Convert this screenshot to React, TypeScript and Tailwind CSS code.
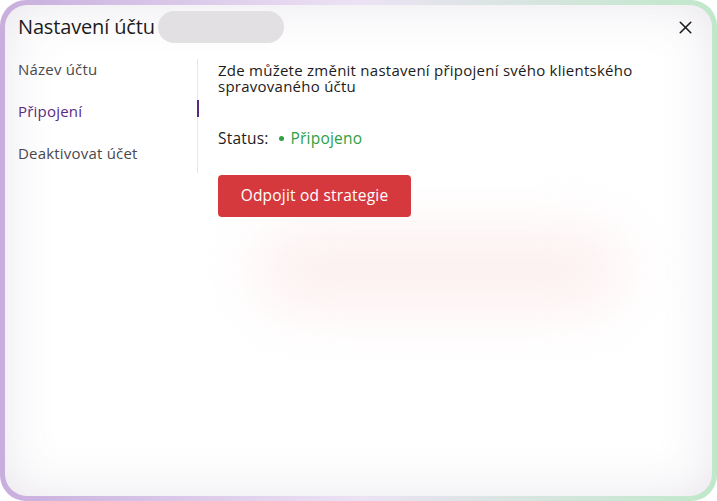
import { X } from 'lucide-react';

const navItems = [
  { id: 'name', label: 'Název účtu' },
  { id: 'connection', label: 'Připojení' },
  { id: 'deactivate', label: 'Deaktivovat účet' },
];

export default function App() {
  const active = 'connection';

  return (
    <div
      className="w-[717px] h-[501px] bg-white overflow-hidden"
      style={{ fontFamily: '"Open Sans", "Noto Sans", sans-serif' }}
    >
      <div className="w-full h-full rounded-[26px] p-[5px] bg-gradient-to-r from-[#c8aedd] via-[#ece2f4] to-[#bfe8c9]">
        <div className="relative w-full h-full rounded-[22px] bg-white shadow-[inset_0_0_50px_rgba(110,95,130,0.16)] overflow-hidden">
          {/* glow */}
          <div className="absolute left-[250px] top-[225px] w-[370px] h-[80px] rounded-full bg-[#fbe3e3] blur-[30px] opacity-55" />

          <div className="relative flex flex-col px-[13px] pt-[6px]">
            {/* Header */}
            <div className="flex items-center h-[32px]">
              <h1 className="text-[20px] text-[#1d1b20] tracking-[-0.15px]">Nastavení účtu</h1>
              <div className="ml-[3px] w-[126px] h-[32px] rounded-full bg-[#e2e0e3]" />
              <button className="ml-auto mr-[3px] text-[#1d1b20]">
                <X size={21} strokeWidth={1.8} />
              </button>
            </div>

            {/* Body */}
            <div className="flex mt-[16px]">
              <nav className="w-[179px] flex flex-col gap-[22px]">
                {navItems.map((item) => (
                  <div
                    key={item.id}
                    className={`text-[15px] leading-[20px] tracking-[0.2px] ${
                      item.id === active ? 'text-[#5a2a82] font-medium' : 'text-[#4a474d]'
                    }`}
                  >
                    {item.label}
                  </div>
                ))}
              </nav>

              <div className="relative w-px h-[114px] bg-[#e8e6ea] mr-[20px]">
                <div className="absolute left-0 top-[41px] w-[2px] h-[17px] bg-[#5a2a82]" />
              </div>

              <div className="flex-1 flex flex-col">
                <p className="text-[15px] leading-[16px] tracking-[0.25px] text-[#1d1b20] w-[440px] pt-[3px]">
                  Zde můžete změnit nastavení připojení svého klientského spravovaného účtu
                </p>
                <div className="flex items-center mt-[34px] text-[15.5px] leading-[20px] tracking-[0.2px]">
                  <span className="text-[#1d1b20]">Status:</span>
                  <span className="ml-[10px] w-[5px] h-[5px] rounded-full bg-[#2ea043]" />
                  <span className="ml-[7px] text-[#2ea043]">Připojeno</span>
                </div>
                <button className="mt-[27px] w-[193px] h-[42px] rounded-[4px] bg-[#d6393d] text-white text-[15.5px] tracking-[0.2px] font-medium">
                  Odpojit od strategie
                </button>
              </div>
            </div>
          </div>
        </div>
      </div>
    </div>
  );
}
